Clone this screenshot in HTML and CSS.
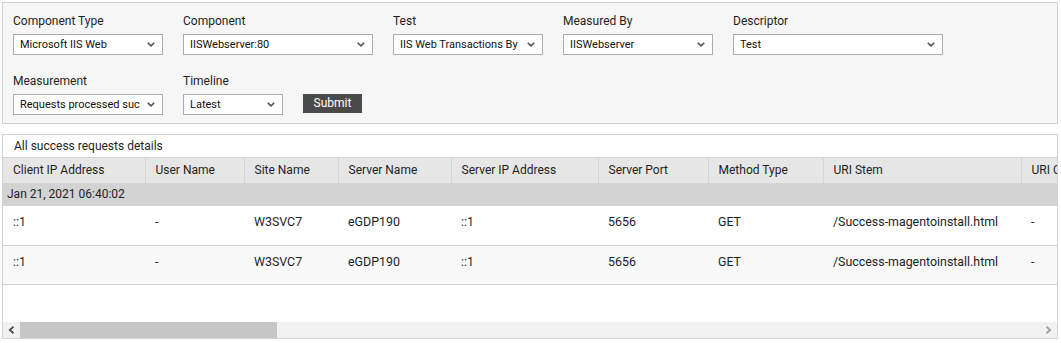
FILE: index.html
```html
<!DOCTYPE html>
<html>
<head>
<meta charset="utf-8">
<link rel="stylesheet" href="styles.css">
</head>
<body>
<div class="page">
  <div class="filters">
    <div class="frow">
      <div class="field"><div class="lbl">Component Type</div><div class="sel w150"><span class="val">Microsoft IIS Web</span><svg class="chev" width="8" height="5" viewBox="0 0 8 5"><path d="M0.8 0.8 L4 3.8 L7.2 0.8" fill="none" stroke="#555" stroke-width="1.6"/></svg></div></div>
      <div class="field"><div class="lbl">Component</div><div class="sel w190"><span class="val">IISWebserver:80</span><svg class="chev" width="8" height="5" viewBox="0 0 8 5"><path d="M0.8 0.8 L4 3.8 L7.2 0.8" fill="none" stroke="#555" stroke-width="1.6"/></svg></div></div>
      <div class="field"><div class="lbl">Test</div><div class="sel w150"><span class="val">IIS Web Transactions By</span><svg class="chev" width="8" height="5" viewBox="0 0 8 5"><path d="M0.8 0.8 L4 3.8 L7.2 0.8" fill="none" stroke="#555" stroke-width="1.6"/></svg></div></div>
      <div class="field"><div class="lbl">Measured By</div><div class="sel w150"><span class="val">IISWebserver</span><svg class="chev" width="8" height="5" viewBox="0 0 8 5"><path d="M0.8 0.8 L4 3.8 L7.2 0.8" fill="none" stroke="#555" stroke-width="1.6"/></svg></div></div>
      <div class="field"><div class="lbl">Descriptor</div><div class="sel w210"><span class="val">Test</span><svg class="chev" width="8" height="5" viewBox="0 0 8 5"><path d="M0.8 0.8 L4 3.8 L7.2 0.8" fill="none" stroke="#555" stroke-width="1.6"/></svg></div></div>
    </div>
    <div class="frow">
      <div class="field"><div class="lbl">Measurement</div><div class="sel w150"><span class="val">Requests processed suc</span><svg class="chev" width="8" height="5" viewBox="0 0 8 5"><path d="M0.8 0.8 L4 3.8 L7.2 0.8" fill="none" stroke="#555" stroke-width="1.6"/></svg></div></div>
      <div class="field"><div class="lbl">Timeline</div><div class="sel w100"><span class="val">Latest</span><svg class="chev" width="8" height="5" viewBox="0 0 8 5"><path d="M0.8 0.8 L4 3.8 L7.2 0.8" fill="none" stroke="#555" stroke-width="1.6"/></svg></div></div>
      <div class="field btnfield"><button class="submit">Submit</button></div>
    </div>
  </div>

  <div class="results">
    <div class="title">All success requests details</div>
    <div class="tablewrap">
      <table class="grid">
        <colgroup>
          <col style="width:142px"><col style="width:99px"><col style="width:94px"><col style="width:113px"><col style="width:147px"><col style="width:110px"><col style="width:115px"><col style="width:198px"><col style="width:120px">
        </colgroup>
        <thead>
          <tr><th>Client IP Address</th><th>User Name</th><th>Site Name</th><th>Server Name</th><th>Server IP Address</th><th>Server Port</th><th>Method Type</th><th>URI Stem</th><th>URI Query</th></tr>
        </thead>
        <tbody>
          <tr class="group"><td colspan="9">Jan 21, 2021 06:40:02</td></tr>
          <tr class="data"><td>::1</td><td>-</td><td>W3SVC7</td><td>eGDP190</td><td>::1</td><td>5656</td><td>GET</td><td>/Success-magentoinstall.html</td><td>-</td></tr>
          <tr class="data alt"><td>::1</td><td>-</td><td>W3SVC7</td><td>eGDP190</td><td>::1</td><td>5656</td><td>GET</td><td>/Success-magentoinstall.html</td><td>-</td></tr>
        </tbody>
      </table>
      <div class="spacer"></div>
    </div>
    <div class="hscroll">
      <span class="arrow">
        <svg width="7" height="8" viewBox="0 0 7 8"><path d="M5.5 0.8 L1.8 4 L5.5 7.2" fill="none" stroke="#505050" stroke-width="1.8"/></svg>
      </span>
      <div class="track"><div class="thumb"></div></div>
      <span class="arrow">
        <svg width="7" height="8" viewBox="0 0 7 8"><path d="M1.5 0.8 L5.2 4 L1.5 7.2" fill="none" stroke="#a0a0a0" stroke-width="1.8"/></svg>
      </span>
    </div>
  </div>
</div>
</body>
</html>
```

FILE: styles.css
```css
html, body {
  margin: 0;
  padding: 0;
  background: #ffffff;
}
body {
  font-family: Roboto, "Liberation Sans", Arial, sans-serif;
  font-size: 12px;
  color: #1e1e1e;
}
.page {
  padding: 2px 3px 0 2px;
}
.filters {
  background: #f6f6f6;
  border: 1px solid #d2d2d2;
  padding: 11px 10px 9px 10px;
  height: 100px;
}
.frow {
  display: flex;
  gap: 20px;
  height: 60px;
}
.field {
  display: flex;
  flex-direction: column;
}
.lbl {
  height: 20px;
  line-height: 15px;
  font-size: 12px;
  color: #1e1e1e;
}
.sel {
  box-sizing: border-box;
  height: 21px;
  border: 1px solid #a9adb6;
  background: #fff;
  display: flex;
  align-items: center;
  padding: 0 7px 0 6px;
  font-size: 11px;
  color: #111;
}
.sel .val {
  flex: 1;
  white-space: nowrap;
  overflow: hidden;
}
.sel .chev {
  flex: none;
  margin-left: 4px;
}
.w150 { width: 150px; }
.w190 { width: 190px; }
.w210 { width: 210px; }
.w100 { width: 100px; }
.btnfield {
  padding-top: 20px;
}
.submit {
  height: 19px;
  width: 59px;
  background: #4a4a4a;
  color: #fff;
  border: none;
  font-family: Roboto, "Liberation Sans", Arial, sans-serif;
  font-size: 12px;
  padding: 0;
  line-height: 19px;
}
.results {
  margin-top: 10px;
  border: 1px solid #d2d2d2;
  border-bottom: none;
}
.title {
  height: 22px;
  line-height: 22px;
  padding-left: 11px;
  font-size: 12px;
  color: #1e1e1e;
  border-bottom: 1px solid #d2d2d2;
}
.tablewrap {
  overflow: hidden;
}
.grid {
  border-collapse: collapse;
  table-layout: fixed;
  width: 1138px;
}
.grid th {
  background: #e6e6e6;
  height: 25px;
  padding: 0 0 0 10px;
  text-align: left;
  font-weight: normal;
  font-size: 12px;
  color: #1e1e1e;
  border-left: 1px solid #d6d6d6;
  white-space: nowrap;
  overflow: hidden;
  line-height: 25px;
}
.grid th:first-child {
  border-left: none;
}
.grid .group td {
  background: #d3d3d3;
  height: 23px;
  padding: 0 0 0 4px;
  font-size: 12px;
  line-height: 23px;
  white-space: nowrap;
}
.grid .data td {
  height: 39px;
  box-sizing: border-box;
  vertical-align: top;
  padding: 8px 0 0 10px;
  line-height: 15px;
  font-size: 12.4px;
  color: #1e1e1e;
  border-bottom: 1px solid #d2d2d2;
  white-space: nowrap;
}
.grid .data.alt td {
  background: #f9f9f9;
}
.spacer {
  height: 37px;
}
.hscroll {
  display: flex;
  height: 16px;
  background: #f1f1f1;
  border-bottom: 1px solid #d2d2d2;
}
.hscroll .arrow {
  width: 17px;
  display: flex;
  align-items: center;
  justify-content: center;
}
.track {
  flex: 1;
}
.thumb {
  width: 257px;
  height: 16px;
  background: #c6c6c6;
}
```
